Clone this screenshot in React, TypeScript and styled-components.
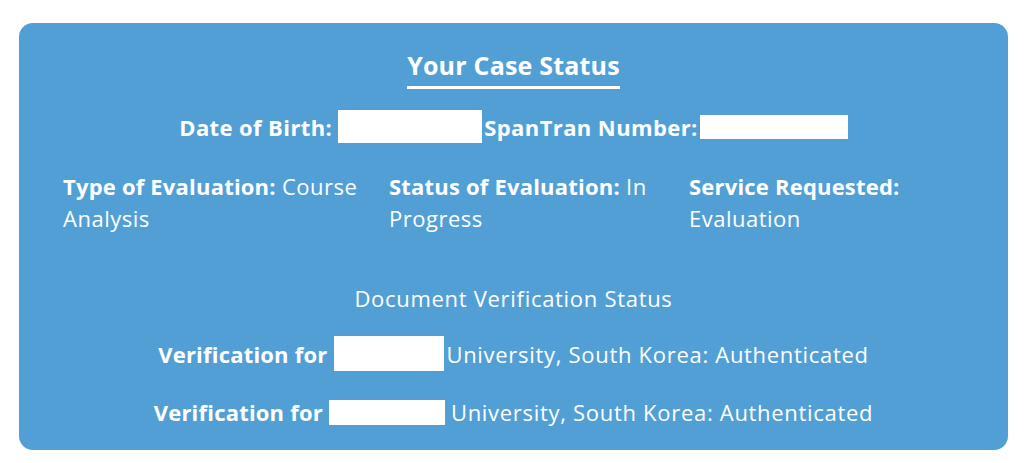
import React, { FC } from "react";
import styled, { createGlobalStyle } from "styled-components";

const GlobalStyle = createGlobalStyle`
	body {
		margin: 0;
		background: #fff;
		font-family: "Open Sans", "Noto Sans", sans-serif;
	}
`;

const Page = styled.div`
	padding: 23px 16px 13px 19px;
`;

const Card = styled.div`
	background: #529fd6;
	border-radius: 14px;
	color: #fff;
	padding: 25px 44px 20px;
	display: flex;
	flex-direction: column;
	align-items: center;
	box-sizing: border-box;
	height: 427px;
`;

const Title = styled.h2`
	margin: 0;
	font-size: 25px;
	font-weight: 700;
	line-height: 34px;
	padding-bottom: 4px;
	border-bottom: 3px solid #fff;
	letter-spacing: 0.2px;
`;

const IdRow = styled.div`
	margin-top: 21px;
	display: flex;
	align-items: center;
	font-size: 22px;
	font-weight: 700;
	letter-spacing: 0.4px;
`;

const Redacted = styled.span<{ w: number; h: number; left: number; right: number }>`
	display: inline-block;
	width: ${(p) => p.w}px;
	height: ${(p) => p.h}px;
	background: #fff;
	margin: 0 ${(p) => p.right}px 0 ${(p) => p.left}px;
`;

const Details = styled.div`
	align-self: stretch;
	margin-top: 27px;
	display: grid;
	grid-template-columns: 326px 300px 1fr;
	font-size: 22px;
	line-height: 32px;
	letter-spacing: 0.5px;
`;

const Detail = styled.div`
	padding-right: 4px;
`;

const Label = styled.b`
	font-weight: 700;
	letter-spacing: 0.2px;
`;

const Subheading = styled.div`
	margin-top: 48px;
	font-size: 22px;
	line-height: 32px;
	letter-spacing: 0.7px;
`;

const VerifyRow = styled.div`
	margin-top: 22px;
	display: flex;
	align-items: center;
	font-size: 22px;
	line-height: 32px;
	letter-spacing: 0.7px;
	&:last-child {
		margin-top: 25px;
	}
`;

const details = [
	{ label: "Type of Evaluation:", value: "Course Analysis" },
	{ label: "Status of Evaluation:", value: "In Progress" },
	{ label: "Service Requested:", value: "Evaluation" },
];

const App: FC = () => {
	return (
		<>
			<GlobalStyle />
			<Page>
				<Card>
					<Title>Your Case Status</Title>
					<IdRow>
						Date of Birth:
						<Redacted w={144} h={33} left={6} right={2} />
						SpanTran Number:
						<Redacted w={148} h={24} left={2} right={0} />
					</IdRow>
					<Details>
						{details.map((d) => (
							<Detail key={d.label}>
								<Label>{d.label}</Label> {d.value}
							</Detail>
						))}
					</Details>
					<Subheading>Document Verification Status</Subheading>
					<VerifyRow>
						<Label>Verification for</Label>
						<Redacted w={110} h={35} left={7} right={2} />
						University, South Korea: Authenticated
					</VerifyRow>
					<VerifyRow>
						<Label>Verification for</Label>
						<Redacted w={116} h={25} left={6} right={6} />
						University, South Korea: Authenticated
					</VerifyRow>
				</Card>
			</Page>
		</>
	);
};

export default App;
